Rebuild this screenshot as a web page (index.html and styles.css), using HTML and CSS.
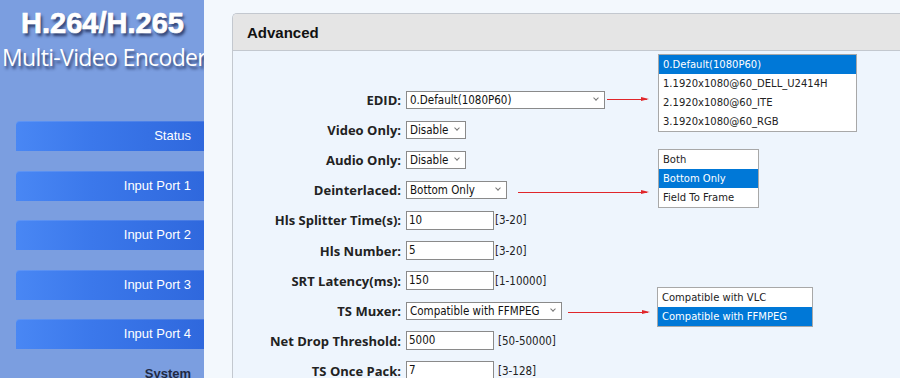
FILE: index.html
```html
<!DOCTYPE html>
<html>
<head>
<meta charset="utf-8">
<link rel="stylesheet" href="styles.css">
</head>
<body>
<div class="page">
  <aside class="sidebar">
    <div class="brand">
      <div class="brand-top">H.264/H.265</div>
      <div class="brand-sub">Multi-Video Encoder</div>
    </div>
    <nav class="nav">
      <a class="nav-btn">Status</a>
      <a class="nav-btn">Input Port 1</a>
      <a class="nav-btn">Input Port 2</a>
      <a class="nav-btn">Input Port 3</a>
      <a class="nav-btn">Input Port 4</a>
      <div class="nav-section">System</div>
    </nav>
  </aside>
  <main class="main">
    <section class="panel">
      <h2 class="panel-head">Advanced</h2>
      <div class="panel-body">
        <div class="form">
          <label class="lbl">EDID:</label>
          <div class="fld"><span class="sel w-edid">0.Default(1080P60)<span class="chev"></span></span></div>

          <label class="lbl">Video Only:</label>
          <div class="fld"><span class="sel w-dis">Disable<span class="chev"></span></span></div>

          <label class="lbl">Audio Only:</label>
          <div class="fld"><span class="sel w-dis">Disable<span class="chev"></span></span></div>

          <label class="lbl">Deinterlaced:</label>
          <div class="fld"><span class="sel w-deint">Bottom Only<span class="chev"></span></span></div>

          <label class="lbl">Hls Splitter Time(s):</label>
          <div class="fld"><span class="inp">10</span><span class="hint">[3-20]</span></div>

          <label class="lbl">Hls Number:</label>
          <div class="fld"><span class="inp">5</span><span class="hint">[3-20]</span></div>

          <label class="lbl">SRT Latency(ms):</label>
          <div class="fld"><span class="inp">150</span><span class="hint">[1-10000]</span></div>

          <label class="lbl">TS Muxer:</label>
          <div class="fld"><span class="sel w-mux">Compatible with FFMPEG<span class="chev"></span></span></div>

          <label class="lbl">Net Drop Threshold:</label>
          <div class="fld"><span class="inp">5000</span><span class="hint sp">[50-50000]</span></div>

          <label class="lbl">TS Once Pack:</label>
          <div class="fld"><span class="inp">7</span><span class="hint sp">[3-128]</span></div>
        </div>
      </div>
    </section>

    <div class="arrow a1"></div>
    <ul class="dd dd1">
      <li class="on">0.Default(1080P60)</li>
      <li>1.1920x1080@60_DELL_U2414H</li>
      <li>2.1920x1080@60_ITE</li>
      <li>3.1920x1080@60_RGB</li>
    </ul>

    <div class="arrow a2"></div>
    <ul class="dd dd2">
      <li>Both</li>
      <li class="on">Bottom Only</li>
      <li>Field To Frame</li>
    </ul>

    <div class="arrow a3"></div>
    <ul class="dd dd3">
      <li>Compatible with VLC</li>
      <li class="on">Compatible with FFMPEG</li>
    </ul>
  </main>
</div>
</body>
</html>
```

FILE: styles.css
```css
html, body {
  margin: 0;
  padding: 0;
  width: 900px;
  height: 378px;
  overflow: hidden;
  background: #f3f8fd;
}

.page {
  display: flex;
  height: 378px;
  overflow: hidden;
}

.sidebar {
  width: 204px;
  flex: 0 0 204px;
  background: #7b9ee0;
  overflow: hidden;
  font-family: "Liberation Sans", Arial, sans-serif;
}

.brand {
  height: 121px;
  text-align: center;
  color: #fff;
}

.brand-top {
  padding-top: 6px;
  font-family: "Liberation Sans", Arial, sans-serif;
  font-weight: bold;
  font-size: 29px;
  line-height: 34px;
  padding-left: 1px;
  -webkit-text-stroke: 0.7px #fff;
  text-shadow: 2px 3px 3px rgba(20, 30, 70, 0.75);
}

.brand-sub {
  margin-top: 1px;
  font-family: "Open Sans", sans-serif;
  font-size: 23px;
  line-height: 32px;
  white-space: nowrap;
  letter-spacing: -0.65px;
  text-align: left;
  padding-left: 2px;
  text-shadow: 2px 3px 3px rgba(20, 30, 70, 0.7);
}

.nav {
  display: flex;
  flex-direction: column;
  padding-left: 16px;
}

.nav-btn {
  display: block;
  height: 30px;
  line-height: 29px;
  margin-bottom: 19.5px;
  padding-right: 13px;
  text-align: right;
  color: #fff;
  font-size: 13px;
  border-top-left-radius: 4px;
  background: linear-gradient(to right, #4987f4 0%, #3b78eb 40%, #2f68dd 100%);
  box-shadow: inset 0 1px 0 rgba(255,255,255,0.12);
}

.nav-section {
  text-align: right;
  padding-right: 13px;
  font-weight: bold;
  font-size: 13px;
  color: #1f2a44;
  margin-top: -3px;
}

.main {
  position: relative;
  flex: 1;
  padding: 13px 0 0 28px;
  overflow: hidden;
}

.panel {
  background: #eef5fd;
  border: 1px solid #c3c8cf;
  border-right: none;
  border-bottom: none;
  border-top-left-radius: 5px;
  height: 364px;
  overflow: hidden;
}

.panel-head {
  margin: 0;
  height: 36px;
  line-height: 37px;
  padding-left: 14px;
  background: #e5e5e5;
  border-bottom: 1px solid #c3c8cf;
  font-family: "Liberation Sans", Arial, sans-serif;
  font-weight: bold;
  font-size: 15px;
  color: #111;
}

.panel-body {
  padding-top: 34px;
}

.form {
  display: grid;
  grid-template-columns: 168px auto;
  column-gap: 5px;
  grid-auto-rows: 30.1px;
  align-items: center;
}

.lbl {
  text-align: right;
  font-family: "Open Sans", sans-serif;
  font-weight: bold;
  font-size: 13px;
  color: #222;
  white-space: nowrap;
}

.fld {
  display: flex;
  align-items: center;
  font-family: "DejaVu Sans Condensed", "DejaVu Sans", sans-serif;
  font-stretch: condensed;
  font-size: 11.5px;
  color: #111;
}

.sel {
  position: relative;
  box-sizing: border-box;
  height: 18px;
  line-height: 16px;
  padding-left: 3px;
  background: #fff;
  border: 1px solid #8a8a8a;
  white-space: nowrap;
}

.w-edid { width: 199px; }
.w-dis { width: 60px; }
.w-deint { width: 101px; }
.w-mux { width: 156px; }

.chev {
  position: absolute;
  right: 6px;
  top: 4px;
  width: 3px;
  height: 3px;
  border-right: 1px solid #777;
  border-bottom: 1px solid #777;
  transform: rotate(45deg);
}

.inp {
  box-sizing: border-box;
  width: 88px;
  height: 19px;
  line-height: 17px;
  padding-left: 2px;
  background: #fff;
  border: 1px solid #8a8a8a;
}

.hint {
  margin-left: 1px;
  color: #222;
}

.hint.sp {
  margin-left: 4px;
}

.arrow {
  position: absolute;
  height: 1px;
  background: #e0262a;
}

.arrow::after {
  content: "";
  position: absolute;
  right: -2px;
  top: -2px;
  border-left: 8px solid #e0262a;
  border-top: 2.5px solid transparent;
  border-bottom: 2.5px solid transparent;
}

.a1 { left: 403px; width: 40px; top: 99px; }
.a2 { left: 314px; width: 129px; top: 192px; }
.a3 { left: 364px; width: 80px; top: 312px; }

.dd {
  position: absolute;
  margin: 0;
  padding: 0;
  list-style: none;
  background: #fff;
  border: 1px solid #a8a8a8;
  font-family: "DejaVu Sans", sans-serif;
  font-size: 10px;
  color: #222;
}

.dd li {
  height: 19px;
  line-height: 19px;
  padding-left: 4px;
  white-space: nowrap;
}

.dd li.on {
  background: #0078d7;
  color: #fff;
}

.dd1 { left: 454px; top: 54px; width: 197px; }
.dd2 { left: 454px; top: 149px; width: 99px; }
.dd3 { left: 453px; top: 287px; width: 154px; }
```
